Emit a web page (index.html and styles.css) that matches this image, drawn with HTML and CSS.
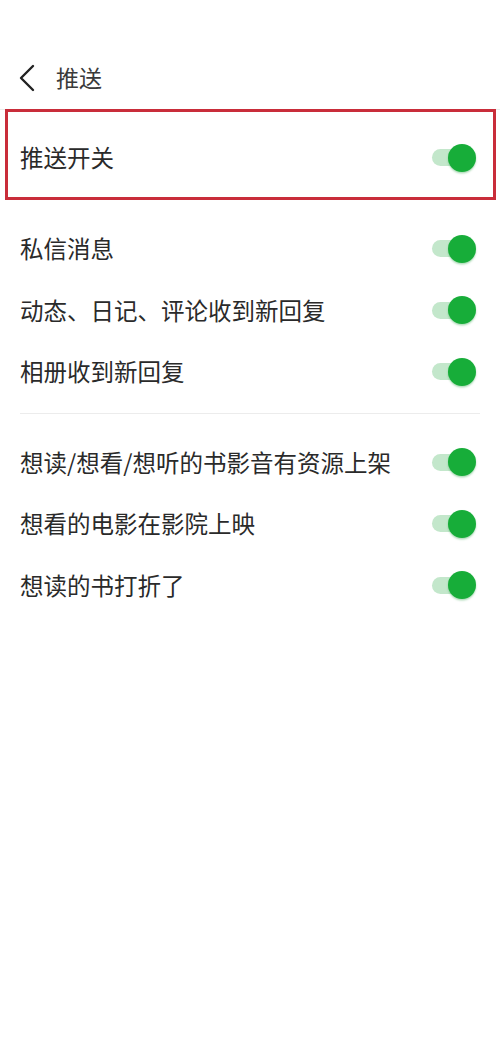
FILE: index.html
```html
<!DOCTYPE html>
<html lang="zh">
<head>
<meta charset="utf-8">
<link rel="stylesheet" href="styles.css">
</head>
<body>
<div class="page">
  <header class="header">
    <svg class="back" width="18" height="28" viewBox="0 0 18 28"><path d="M15 2 L3 14 L15 26" fill="none" stroke="#222" stroke-width="2.4" stroke-linecap="round" stroke-linejoin="round"/></svg>
    <span class="title">推送</span>
  </header>
  <div class="row row-main">
    <span class="label">推送开关</span>
    <span class="toggle"><span class="track"></span><span class="knob"></span></span>
  </div>
  <div class="group">
    <div class="row"><span class="label">私信消息</span><span class="toggle"><span class="track"></span><span class="knob"></span></span></div>
    <div class="row"><span class="label">动态、日记、评论收到新回复</span><span class="toggle"><span class="track"></span><span class="knob"></span></span></div>
    <div class="row"><span class="label">相册收到新回复</span><span class="toggle"><span class="track"></span><span class="knob"></span></span></div>
  </div>
  <div class="divider"></div>
  <div class="group">
    <div class="row"><span class="label">想读/想看/想听的书影音有资源上架</span><span class="toggle"><span class="track"></span><span class="knob"></span></span></div>
    <div class="row"><span class="label">想看的电影在影院上映</span><span class="toggle"><span class="track"></span><span class="knob"></span></span></div>
    <div class="row"><span class="label">想读的书打折了</span><span class="toggle"><span class="track"></span><span class="knob"></span></span></div>
  </div>
</div>
</body>
</html>
```
FILE: styles.css
```css
html, body {
  margin: 0;
  padding: 0;
  background: #fff;
}
body {
  font-family: "Noto Sans CJK SC", "Noto Sans", sans-serif;
  color: #2a2a2a;
}
.page {
  width: 500px;
  height: 1056px;
}
.header {
  box-sizing: border-box;
  height: 110px;
  padding: 46px 0 0 18px;
  display: flex;
  align-items: center;
  border-bottom: 1px solid #ececec;
}
.header .back {
  height: 28px;
  width: 18px;
}
.title {
  margin-left: 20px;
  font-size: 23px;
  line-height: 1;
  color: #3a3a3a;
}
.row {
  box-sizing: border-box;
  height: 61.5px;
  display: flex;
  align-items: center;
  justify-content: space-between;
  padding: 0 24px 0 20px;
}
.row-main {
  height: 91px;
  margin: -1px 4px 0 5px;
  border: 3px solid #c92d3a;
  padding: 6px 17px 0 12px;
}
.label {
  font-size: 23.5px;
  line-height: 1;
}
.toggle {
  position: relative;
  width: 45px;
  height: 28px;
  flex: none;
}
.track {
  position: absolute;
  left: 1px;
  top: 5.5px;
  width: 34px;
  height: 17px;
  border-radius: 9px;
  background: #c3e7cb;
}
.knob {
  position: absolute;
  right: 0;
  top: 0;
  width: 28px;
  height: 28px;
  border-radius: 50%;
  background: #17ad39;
  box-shadow: 0 1.5px 2px rgba(20, 150, 50, 0.35);
}
.group {
  padding-top: 18px;
}
.divider {
  height: 1px;
  margin: 10px 20px 0 20px;
  background: #ececec;
}
```
